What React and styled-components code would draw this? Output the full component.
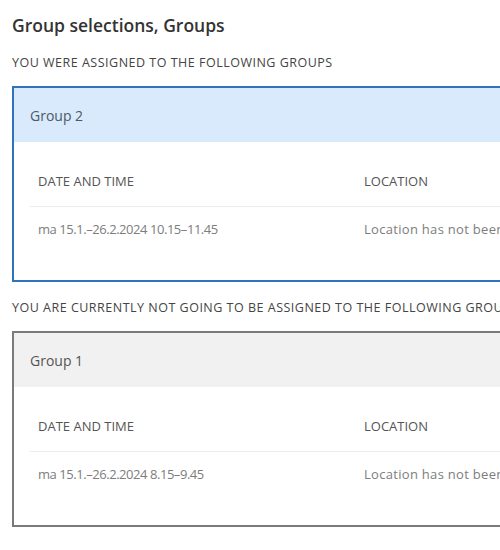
import React from "react";
import styled, { createGlobalStyle } from "styled-components";

const Global = createGlobalStyle`
  html, body { margin: 0; padding: 0; background: #fff; }
  body { font-family: "Open Sans", "Noto Sans", sans-serif; overflow: hidden; }
`;

const Page = styled.div`
  width: 500px;
  height: 550px;
  overflow: hidden;
  padding: 13px 0 0 12px;
  box-sizing: border-box;
`;

const Title = styled.h2`
  margin: 0;
  font-size: 17.5px;
  line-height: 24px;
  font-weight: 600;
  color: #333;
  white-space: nowrap;
`;

const SectionLabel = styled.div`
  margin: 18px 0 15px;
  font-size: 12.5px;
  line-height: 16px;
  letter-spacing: 0.5px;
  text-transform: uppercase;
  color: #444;
  white-space: nowrap;
`;

const Card = styled.section`
  width: 720px;
  border: 2px solid ${(p) => (p.$active ? "#3073b8" : "#7a7a7a")};
  background: #fff;
`;

const CardHeader = styled.div`
  height: 54px;
  display: flex;
  align-items: center;
  padding-left: 16px;
  background: ${(p) => (p.$active ? "#d8eafb" : "#f1f1f1")};
  color: ${(p) => (p.$active ? "#4d5966" : "#555")};
  font-size: 14px;
`;

const CardBody = styled.div`
  padding: 14px 16px 29px;
`;

const Table = styled.table`
  width: 100%;
  border-collapse: collapse;
  table-layout: fixed;
`;

const Th = styled.th`
  text-align: left;
  font-weight: 400;
  font-size: 13px;
  line-height: 16px;
  text-transform: uppercase;
  color: #555;
  padding: 17px 8px;
  border-bottom: 1px solid #ececec;
  width: ${(p) => p.$w || "auto"};
  white-space: nowrap;
`;

const Td = styled.td`
  font-size: 13px;
  line-height: 16px;
  letter-spacing: ${(p) => (p.$tight ? "-0.45px" : "0.3px")};
  color: #7d7d7d;
  padding: 14px 8px;
  white-space: nowrap;
`;

const groups = [
  {
    label: "You were assigned to the following groups",
    name: "Group 2",
    time: "ma 15.1.–26.2.2024 10.15–11.45",
    active: true,
  },
  {
    label: "You are currently not going to be assigned to the following groups",
    name: "Group 1",
    time: "ma 15.1.–26.2.2024 8.15–9.45",
    active: false,
  },
];

export default function App() {
  return (
    <>
      <Global />
      <Page>
        <Title>Group selections, Groups</Title>
        {groups.map((g) => (
          <React.Fragment key={g.name}>
            <SectionLabel>{g.label}</SectionLabel>
            <Card $active={g.active}>
              <CardHeader $active={g.active}>{g.name}</CardHeader>
              <CardBody>
                <Table>
                  <thead>
                    <tr>
                      <Th $w="310px">Date and time</Th>
                      <Th>Location</Th>
                    </tr>
                  </thead>
                  <tbody>
                    <tr>
                      <Td $tight>{g.time}</Td>
                      <Td>Location has not been announced</Td>
                    </tr>
                  </tbody>
                </Table>
              </CardBody>
            </Card>
          </React.Fragment>
        ))}
      </Page>
    </>
  );
}
